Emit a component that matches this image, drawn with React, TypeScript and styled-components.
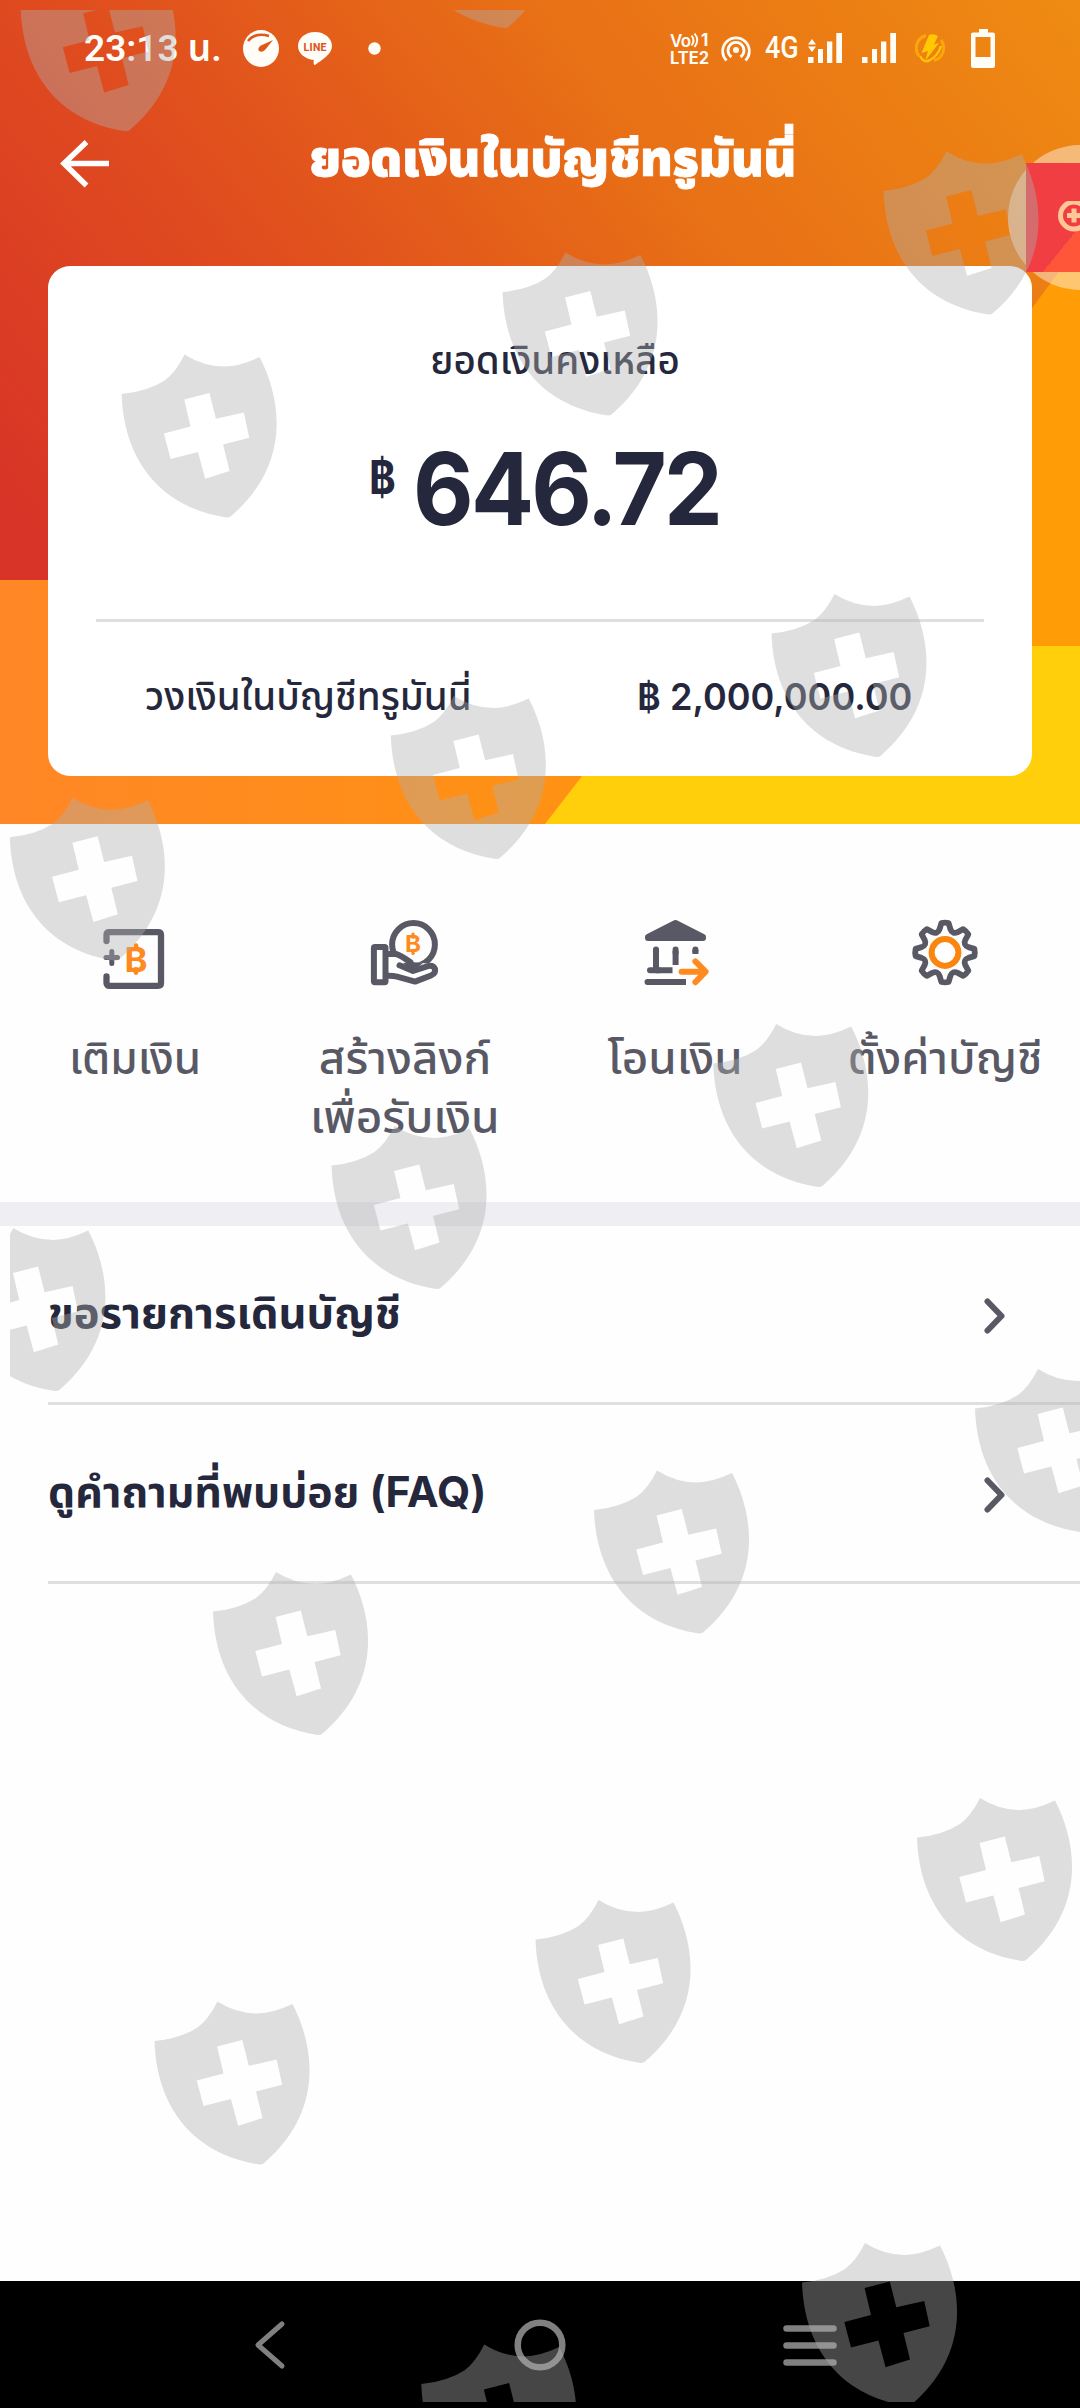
import React from "react";
import styled, { createGlobalStyle } from "styled-components";

const Global = createGlobalStyle`
  * { box-sizing: border-box; }
  body { margin: 0; background: #fff; }
`;

const family = `Inter, "Noto Sans Thai", "Noto Sans", sans-serif`;
const ink = "#25283c";
const slate = "#595966";
const orange = "#ff8a1f";

const Screen = styled.div`
  position: relative;
  width: 1080px;
  height: 2408px;
  overflow: hidden;
  display: flex;
  flex-direction: column;
  background: #fefefe;
  font-family: ${family};
  color: ${ink};
`;

const Hero = styled.header`
  position: relative;
  isolation: isolate;
  height: 824px;
  flex: none;
  display: flex;
  flex-direction: column;
  background: #fecf0a;
`;

const HeroShape = styled.div<{ $fill: string; $clip: string }>`
  position: absolute;
  inset: 0;
  z-index: -1;
  background: ${(p) => p.$fill};
  clip-path: ${(p) => p.$clip};
`;

const StatusBar = styled.div`
  height: 96px;
  flex: none;
  display: flex;
  align-items: center;
  justify-content: space-between;
  padding: 0 85px 0 84px;
  color: #fffdf8;
`;

const StatusGroup = styled.div`
  display: flex;
  align-items: center;
`;

const Clock = styled.span`
  width: 136px;
  font: 600 37px/40px Roboto, "Noto Sans Thai", sans-serif;
  padding-top: 2px;
  white-space: nowrap;
`;

const Network = styled.span`
  width: 33px;
  font: 500 31px/34px Roboto, sans-serif;
`;

const VolteIcon = styled.svg`
  overflow: visible;
`;

const Slot = styled.span<{ $before: number }>`
  display: flex;
  margin-left: ${(p) => p.$before}px;
`;

const TitleBar = styled.div`
  height: 170px;
  flex: none;
  display: flex;
  align-items: flex-start;
  padding: 35px 0 0 60px;
`;

const Title = styled.h1`
  margin: -3px 0 0 204px;
  width: 480px;
  display: flex;
  justify-content: center;
  color: #fff;
  font-size: 49px;
  line-height: 62px;
  font-weight: 900;
  -webkit-text-stroke: 0.8px #fff;
`;

const Fit = styled.span<{ $x?: number; $track?: number; $from?: string }>`
  display: inline-block;
  white-space: nowrap;
  letter-spacing: ${(p) => p.$track ?? 0}px;
  transform: scaleX(${(p) => p.$x ?? 1});
  transform-origin: ${(p) => p.$from ?? "center"};
`;

const Card = styled.section`
  height: 510px;
  flex: none;
  margin: 0 48px;
  padding: 0 48px;
  border-radius: 22px;
  background: #fff;
  display: flex;
  flex-direction: column;
`;

const CardTop = styled.div`
  height: 356px;
  border-bottom: 3px solid #dfdfdf;
  display: flex;
  flex-direction: column;
  align-items: center;
  padding-top: 68px;
`;

const CardLabel = styled.div`
  font-size: 38.5px;
  line-height: 52px;
  font-weight: 500;
  padding-left: 30px;
`;

const Amount = styled.div`
  align-self: flex-start;
  display: flex;
  align-items: flex-start;
  gap: 14px;
  margin-top: 42px;
  margin-left: 273px;
  line-height: 120px;
  height: 120px;
`;

const Baht = styled.span`
  font-size: 46px;
  font-weight: 700;
  line-height: 58px;
  padding-top: 20px;
`;

const Figure = styled.span`
  font-size: 101px;
  font-weight: 700;
  line-height: 120px;
`;

const CardRow = styled.div`
  flex: 1;
  display: flex;
  justify-content: space-between;
  padding: 46px 72px 0 49px;
  font-size: 38.5px;
  line-height: 56px;
  font-weight: 500;
`;

const Limit = styled.span`
  font-size: 37px;
  font-weight: 600;
  padding-top: 1px;
`;

const Actions = styled.nav`
  height: 378px;
  flex: none;
  display: grid;
  grid-template-columns: repeat(4, 270px);
  padding-top: 94px;
`;

const Action = styled.button`
  border: 0;
  background: none;
  padding: 0;
  display: flex;
  flex-direction: column;
  align-items: center;
  gap: 35px;
  color: ${slate};
  font: 500 44px/59px ${family};
`;

const ActionLabel = styled.span`
  display: flex;
  flex-direction: column;
  align-items: center;
`;

const Band = styled.div`
  height: 24px;
  flex: none;
  background: #eeeef3;
`;

const List = styled.div`
  flex: 1;
  padding-left: 48px;
`;

const Item = styled.div`
  height: 179px;
  border-bottom: 3px solid #dfdfdf;
  display: flex;
  align-items: center;
  justify-content: space-between;
  padding: 3px 72px 0 0;
  font-size: 43px;
  line-height: 60px;
  font-weight: 700;
`;

const ItemLabel = styled.span`
  padding-bottom: 8px;
`;

const NavBar = styled.footer`
  height: 127px;
  flex: none;
  background: #000;
  display: grid;
  grid-template-columns: repeat(3, 270px);
  justify-content: center;
  justify-items: center;
  align-items: center;
`;

const Floating = styled.div`
  position: absolute;
  left: 1008px;
  top: 145px;
  width: 145px;
  height: 145px;
  border-radius: 50%;
  background: rgba(255, 255, 255, 0.43);
  display: flex;
  align-items: center;
`;

const FloatingTile = styled.div`
  width: 110px;
  height: 109px;
  margin-left: 18px;
  display: flex;
  align-items: center;
  padding-left: 31px;
  background: linear-gradient(129deg, #f03e42 0 53%, #ff5538 53%);
`;

const Marks = styled.svg`
  position: absolute;
  left: 0;
  top: 0;
  pointer-events: none;
`;

const shields: [number, number][] = [
  [20.6, -31.7], [399.5, -135], [883.5, 151.5], [502.5, 252.5], [121.6, 354.5],
  [771.5, 594], [390.8, 696], [9.8, 797.7], [713.2, 1024], [331.5, 1126],
  [-49.7, 1228], [975, 1369], [594, 1470.5], [213, 1572], [917, 1798],
  [535.5, 1900], [154.5, 2001.5], [802, 2243], [421.3, 2344.5],
];

const shieldPath =
  "M0 39.6Q26 37 43 26Q54 18 63 0Q82 12 103 12Q118 12 138 2.6C160 45 170 110 109 162Q108 163 105 163C38 153 2 105 0 39.6Z" +
  "M62.6 45L69 72L42.3 79L49 104.6L76.4 97.6L83.6 124.3L108 116.6L101.5 90L127.7 83.3L122.2 58L94.3 64.3L87.8 38.6Z";

const Watermark = () => (
  <Marks width="1080" height="2408" viewBox="0 0 1080 2408">
    <clipPath id="safe"><rect x="10" y="10" width="1070" height="2392" /></clipPath>
    <g clipPath="url(#safe)" fill="#afafaf" fillOpacity="0.4" fillRule="evenodd">
      {shields.map(([x, y]) => (
        <path key={`${x}:${y}`} d={shieldPath} transform={`translate(${x} ${y})`} />
      ))}
    </g>
  </Marks>
);

const line = (width: number, color: string = slate) => ({
  fill: "none", stroke: color, strokeWidth: width,
  strokeLinecap: "round" as const, strokeLinejoin: "round" as const,
});

const BahtMark = ({ x, y, size, w }: { x: number; y: number; size: number; w: number }) => (
  <>
    <text x={x} y={y} fill={orange} fontFamily="Inter, sans-serif" fontWeight={700} fontSize={size}
      textLength={w} lengthAdjust="spacingAndGlyphs">B</text>
    <path {...line(size / 7, orange)}
      d={`M${x + w / 2} ${y - size * 0.73 - 1}v3M${x + w / 2} ${y + 1}v-3`} />
  </>
);

const TopUpIcon = () => (
  <svg width="72" height="76" viewBox="0 0 72 76">
    <path {...line(6.3)} d="M7.5 23V17Q7.5 14.2 10.5 14.2H59Q62 14.2 62 17V65Q62 67.8 59 67.8H10.5Q7.5 67.8 7.5 65V58.5" />
    <path {...line(5)} d="M7 39.5H18.5M12.8 33.5V45.5" />
    <BahtMark x={25.5} y={53.5} size={34} w={23} />
  </svg>
);

const LinkIcon = () => (
  <svg width="72" height="76" viewBox="0 0 72 76">
    <circle cx="44.5" cy="26.5" r="21.4" {...line(6)} />
    <path d="M19 36H27L44 44L63 46L66 52L46 66L22 60Z" fill="#fefefe" />
    <rect x="4.9" y="29" width="11.6" height="35.2" rx="1" {...line(6)} />
    <path {...line(6)} d="M19 36H27Q31 37 41.5 44.2M30.5 47.3L44 53L58 48.3Q64 46.5 66 51Q67 55.5 62 57.5L46 63.6L28 58.6Q24 57.7 19 57.8" />
    <path d="M34 45L42 44L54 45L44 53Z" fill={slate} />
    <BahtMark x={36} y={34.4} size={23.5} w={16} />
  </svg>
);

const TransferIcon = () => (
  <svg width="72" height="76" viewBox="0 0 72 76">
    <path d="M36.5 5L64 19V20H9V19Z" fill={slate} stroke={slate} strokeWidth="6" strokeLinejoin="round" />
    <path {...line(6)} d="M17 31.6V52.3M11 52.3H20M36.6 31.6V35M56.4 31.6V33M8.5 64H20" />
    <path {...line(6)} strokeLinecap="butt" d="M36.6 33V47M56.4 32V36M17 52.3H33.5M17 64H47" />
    <path {...line(6, orange)} d="M42.6 53.7H66M56.4 43.4L66.6 53.7L56.4 64.2" />
  </svg>
);

const gearPath = (() => {
  const at = (r: number, deg: number) => {
    const a = ((deg - 90) * Math.PI) / 180;
    return `${(36 + r * Math.cos(a)).toFixed(2)} ${(34.5 + r * Math.sin(a)).toFixed(2)}`;
  };
  let d = "";
  for (let i = 0; i < 8; i++) {
    const t = i * 45;
    d += `${i ? "L" : "M"}${at(29.6, t - 7)}Q${at(30.2, t)} ${at(29.6, t + 7)}L${at(24, t + 13)}Q${at(19.4, t + 22.5)} ${at(24, t + 32)}`;
  }
  return d + "Z";
})();

const SettingsIcon = () => (
  <svg width="72" height="76" viewBox="0 0 72 76">
    <path d={gearPath} {...line(5.8)} />
    <circle cx="36" cy="34.5" r="13.4" {...line(6, "#fa860f")} />
  </svg>
);

const Chevron = () => (
  <svg width="26" height="38" viewBox="0 0 26 38">
    <path d="M5.5 4.5L19.5 19L5.5 33.5" {...line(6)} />
  </svg>
);

const Signal = ({ data }: { data?: boolean }) => (
  <svg width="34" height="30" viewBox="0 0 34 30" fill="currentColor">
    <path d="M0 24h5.5v6H0zM10 16h5v14h-5zM19 8.5h5.3V30H19zM28.3 0H34v30h-5.7z" />
    {data && <path d="M0 11.5L4 6l4 5.5zM0 13.5L4 19l4-5.5z" />}
  </svg>
);

const actions = [
  { icon: <TopUpIcon />, lines: ["เติมเงิน"], x: [1] },
  { icon: <LinkIcon />, lines: ["สร้างลิงก์", "เพื่อรับเงิน"], x: [1.038, 1.044] },
  { icon: <TransferIcon />, lines: ["โอนเงิน"], x: [1.04] },
  { icon: <SettingsIcon />, lines: ["ตั้งค่าบัญชี"], x: [1.024] },
];

const items = [
  { label: "ขอรายการเดินบัญชี", x: 1.011 },
  { label: "ดูคำถามที่พบบ่อย (FAQ)", x: 0.995 },
];

export default function App() {
  return (
    <Screen>
      <Global />
      <Hero>
        <HeroShape $fill="#ff9c06" $clip="polygon(500px 0, 100% 0, 100% 646px, 500px 646px)" />
        <HeroShape $fill="linear-gradient(90deg, #ff8726, #ff9213 580px)" $clip="polygon(0 560px, 749px 560px, 545px 824px, 0 824px)" />
        <HeroShape
          $fill="linear-gradient(52deg, #d83427 15%, #e04e1e 42%, #e86f16 67%, #ef8b12 100%)"
          $clip="polygon(0 0, 100% 0, 100% 243px, 832px 580px, 0 580px)"
        />
        <StatusBar>
          <StatusGroup>
            <Clock>23:13 น.</Clock>
            <Slot $before={23}>
              <svg width="36" height="37" viewBox="0 0 36 37">
                <ellipse cx="18" cy="18.5" rx="18" ry="18.5" fill="currentColor" />
                <path d="M5 11Q12 2 26 6" fill="none" stroke="#e0571c" strokeWidth="2.6" />
                <path d="M30 10L22 20Q19 23 16 21Q14 18 18 15.5Z" fill="#e0571c" />
              </svg>
            </Slot>
            <Slot $before={19}>
              <svg width="34" height="33" viewBox="0 0 34 33">
                <path d="M17 0C26.5 0 34 6.3 34 14C34 22 25 27 17 33Q15 33 15.8 28C7 27 0 21.5 0 14C0 6.3 7.5 0 17 0Z" fill="currentColor" />
                <text x="5.5" y="18.5" fontFamily="Roboto, sans-serif" fontWeight="800" fontSize="10.5" textLength="23" fill="#e0571c">LINE</text>
              </svg>
            </Slot>
            <Slot $before={36}>
              <svg width="13" height="13" viewBox="0 0 13 13"><circle cx="6.5" cy="6.5" r="6.2" fill="currentColor" /></svg>
            </Slot>
          </StatusGroup>
          <StatusGroup>
            <VolteIcon width="41" height="36" viewBox="0 0 41 36" fill="currentColor" fontFamily="Inter, sans-serif" fontWeight="700">
              <text x="0" y="16.5" fontSize="17" fontWeight="600" textLength="21">Vo</text>
              <path d="M21.500 5.500Q25.500 10.500 21.500 15.500M24.500 3.500Q30 10 24.500 17" fill="none" stroke="currentColor" strokeWidth="1.900" />
              <text x="31" y="16" fontSize="17">1</text>
              <text x="0" y="34" fontSize="17" textLength="39" lengthAdjust="spacingAndGlyphs">LTE2</text>
            </VolteIcon>
            <Slot $before={10}>
              <svg width="30" height="28" viewBox="0 0 30 28" fill="none" stroke="currentColor" strokeWidth="2.8">
                <circle cx="15" cy="16" r="3" fill="currentColor" stroke="none" />
                <path d="M10.5 23A8 8 0 1 1 19.5 23M5.5 26.5A13.3 13.3 0 1 1 24.5 26.5" />
              </svg>
            </Slot>
            <Slot $before={14}><Network><Fit $x={0.87} $from="left">4G</Fit></Network></Slot>
            <Slot $before={10}><Signal data /></Slot>
            <Slot $before={20}><Signal /></Slot>
            <Slot $before={19}>
              <svg width="30" height="30" viewBox="0 0 30 30" fill="none">
                <path d="M11 2.5A13 13 0 0 0 4 23M19 27.500A13 13 0 0 0 26 7" stroke="#fca60a" strokeWidth="3" />
                <path d="M5 23Q9 31 15 27Q23 23 26 13" stroke="#ffc40a" strokeWidth="2.400" />
                <path d="M14 2Q18 0 23 3L19 11.500L24 10L10 28L13 18L6.500 20Z" fill="#ffc800" />
              </svg>
            </Slot>
            <Slot $before={26}>
              <svg width="24" height="39" viewBox="0 0 24 39">
                <path fillRule="evenodd" d="M8 0H17V3.5H22Q24 3.5 24 5.5V37Q24 39 22 39H2Q0 39 0 37V5.5Q0 3.5 2 3.5H8ZM4.5 8V28H19.5V8Z" fill="currentColor" />
              </svg>
            </Slot>
          </StatusGroup>
        </StatusBar>
        <TitleBar>
          <svg width="49" height="64" viewBox="0 0 49 64">
            <path d="M26.5 11L4 32.5L26.5 54.5M3 32.5H49" fill="none" stroke="#fff" strokeWidth="5.5" />
          </svg>
          <Title><Fit>ยอดเงินในบัญชีทรูมันนี่</Fit></Title>
        </TitleBar>
        <Card>
          <CardTop>
            <CardLabel><Fit>ยอดเงินคงเหลือ</Fit></CardLabel>
            <Amount>
              <Baht><Fit $x={0.88} $from="left">฿</Fit></Baht>
              <Figure><Fit $x={0.925} $track={-3} $from="left">646.72</Fit></Figure>
            </Amount>
          </CardTop>
          <CardRow>
            <Fit $from="left">วงเงินในบัญชีทรูมันนี่</Fit>
            <Limit><Fit $x={0.975} $from="right">฿ 2,000,000.00</Fit></Limit>
          </CardRow>
        </Card>
      </Hero>
      <Actions>
        {actions.map((a) => (
          <Action key={a.lines[0]}>
            {a.icon}
            <ActionLabel>
              {a.lines.map((l, i) => <Fit key={l} $x={a.x[i]}>{l}</Fit>)}
            </ActionLabel>
          </Action>
        ))}
      </Actions>
      <Band />
      <List>
        {items.map((it) => (
          <Item key={it.label}>
            <ItemLabel><Fit $x={it.x} $from="left">{it.label}</Fit></ItemLabel>
            <Chevron />
          </Item>
        ))}
      </List>
      <NavBar>
        <svg width="54" height="54" viewBox="0 0 54 54"><path d="M39 6L15 27L39 48" {...line(5, "#808080")} /></svg>
        <svg width="54" height="54" viewBox="0 0 54 54"><circle cx="27" cy="27" r="22.3" {...line(6.5, "#808080")} /></svg>
        <svg width="54" height="54" viewBox="0 0 54 54"><path d="M3.5 10.5H50.5M3.5 27.5H50.5M3.5 44.5H50.5" {...line(6.5, "#808080")} /></svg>
      </NavBar>
      <Floating>
        <FloatingTile>
          <svg width="34" height="34" viewBox="0 0 34 34">
            <circle cx="17" cy="12" r="13.5" fill="none" stroke="#ffc795" strokeWidth="5" transform="translate(0 2.500)" />
            <path d="M17 7.500V21.500M10 14.500H24" stroke="#ffc795" strokeWidth="5" />
          </svg>
        </FloatingTile>
      </Floating>
      <Watermark />
    </Screen>
  );
}
